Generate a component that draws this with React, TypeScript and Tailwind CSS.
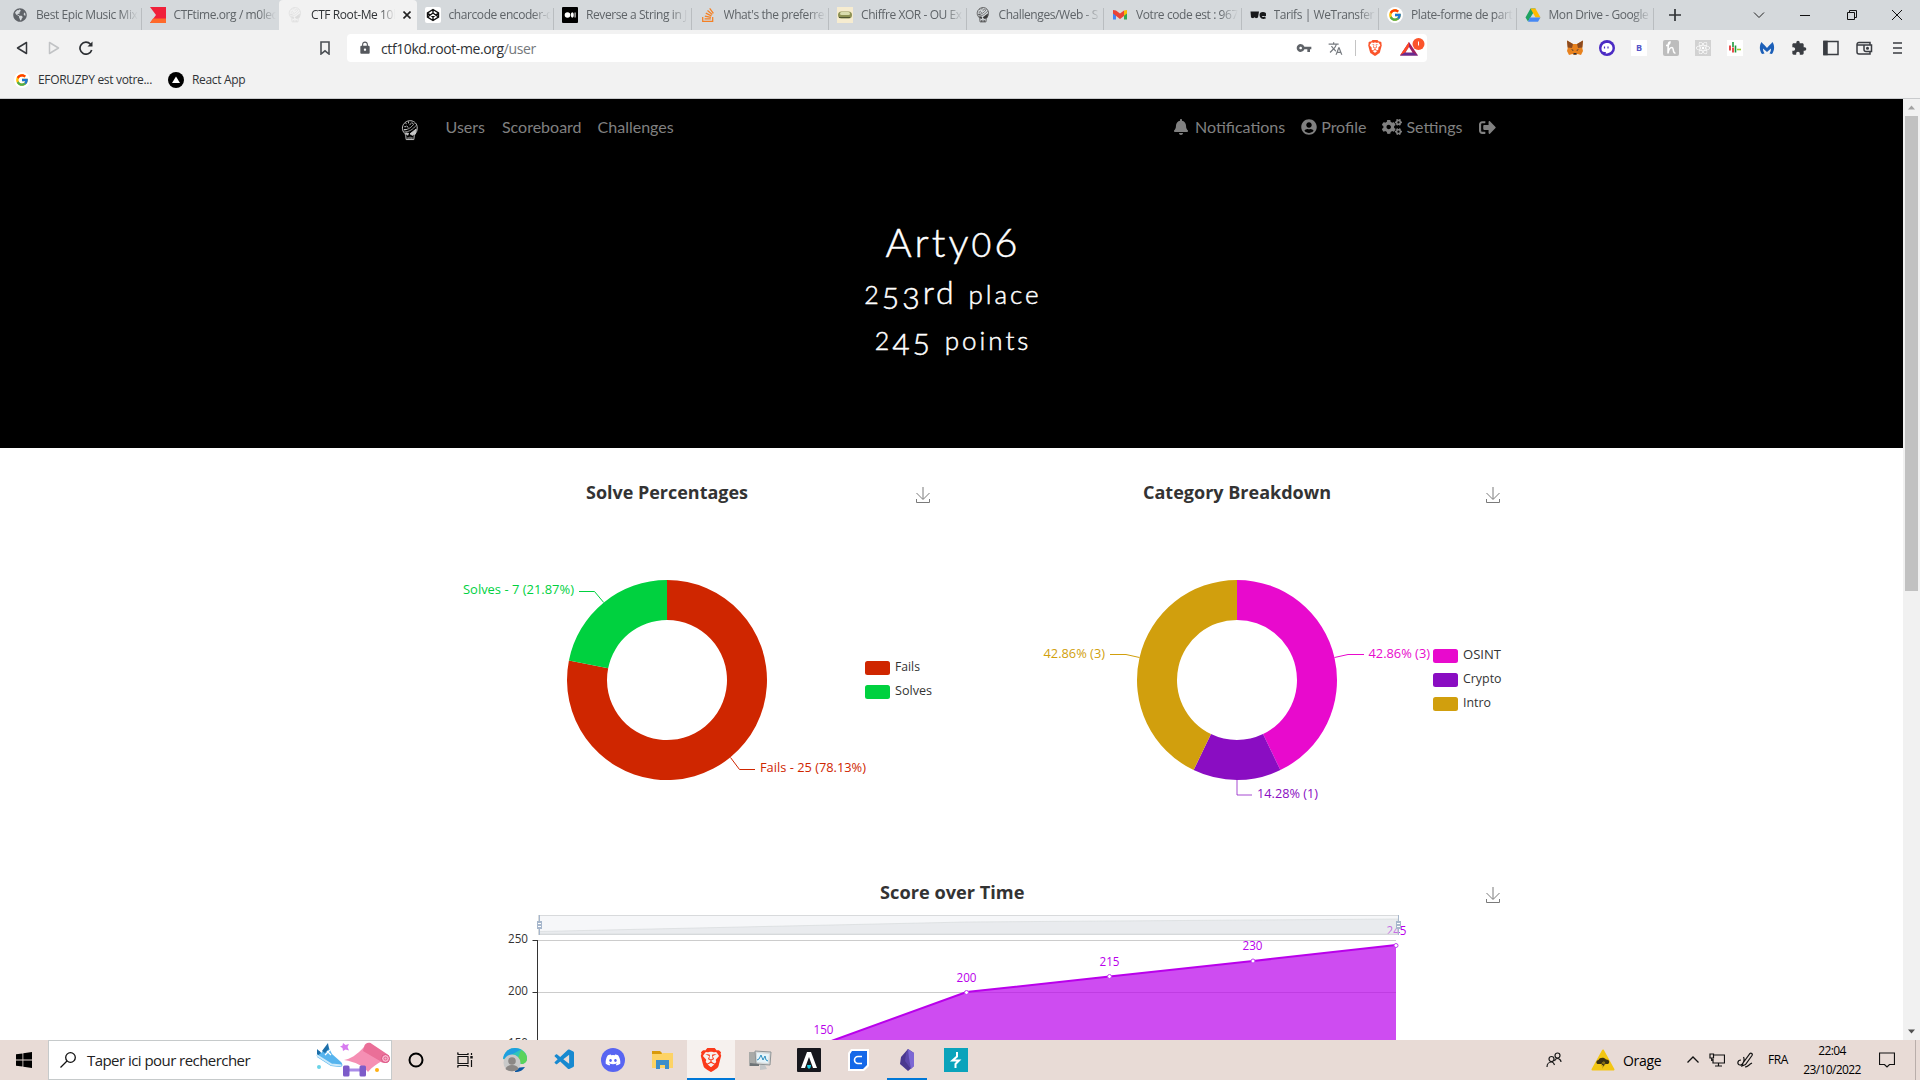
import React from "react";
import {
  FaBell,
  FaUserCircle,
  FaCogs,
  FaSignOutAlt,
  FaDiscord,
  FaStackOverflow,
  FaReact,
  FaGlobeAmericas,
} from "react-icons/fa";
import { MdLock, MdVpnKey, MdTranslate, MdExtension } from "react-icons/md";
import { SiBrave } from "react-icons/si";
import { VscVscode } from "react-icons/vsc";
import { FcGoogle } from "react-icons/fc";

/* ---------- small glyphs ---------- */

function Skull({ color, className }: { color: string; className: string }) {
  return (
    <svg viewBox="0 0 18 22" className={className} fill="none" stroke={color} strokeWidth="1">
      <path d="M3.500 14C0 11 .6 6 3 3.500S9-.2 12.500 1.500 17.500 7 16 12l-2.500 4-.5 4.500H5L4.500 16z" />
      <path d="M4 3l1.500 1M7.500 1.500v2M3 7h2M8.500 5l2-1.500M5.500 6l1.500 2M11 2.500l1 1.500M2.500 10h3" />
      <path d="M3 12.500c5 0 9-2.500 12.500-7M2.500 10.500C7 10 10.500 8 13.500 3.500" strokeWidth=".8" />
      <path d="M4 14l3 1.500M7 18v2.500M9 17.500v3M11 18v2.500" />
      <path d="M9 14.500l6.500-5-1 5-3 1.500z" fill={color} />
      <path d="M4.500 13.500l3 .5-1 2z" fill={color} />
    </svg>
  );
}

function Gmail() {
  return (
    <svg viewBox="0 0 16 16" className="size-4">
      <path d="M1 4v8.500h3V6z" fill="#4285f4" />
      <path d="M15 4v8.500h-3V6z" fill="#34a853" />
      <path d="M12 3.500 15 3v3.500l-3 2.300z" fill="#fbbc04" />
      <path d="M1 3l3 .5 4 3 4-3V9L8 12 1 6.500z" fill="#ea4335" />
    </svg>
  );
}

function Drive() {
  return (
    <svg viewBox="0 0 16 16" className="size-4">
      <path d="M5.500 1.500h5L8 6.300 3 14.500.5 10.500z" fill="#1ea362" />
      <path d="M5.500 1.500h5l5 9h-5z" fill="#ffba00" />
      <path d="M5 10.500h10.500L13 14.700H3z" fill="#4688f4" />
    </svg>
  );
}

function GoogleDot() {
  return (
    <span className="flex size-4 items-center justify-center rounded-full bg-white">
      <FcGoogle className="size-3.5" />
    </span>
  );
}

function TabIcon({ name }: { name: string }) {
  switch (name) {
    case "globe":
      return <FaGlobeAmericas className="size-3.5 text-[#5f6368]" />;
    case "ctftime":
      return (
        <svg viewBox="0 0 16 16" className="size-4">
          <path d="M0 0h16v16H0l6-8z" fill="#f0203a" />
          <path d="M3 11.500h13V16H0z" fill="#ff6a2b" />
        </svg>
      );
    case "rootme":
      return <Skull color="#dcdcdc" className="h-4 w-3.5" />;
    case "challenge":
      return <Skull color="#3a3a3a" className="h-4 w-3.5" />;
    case "codepen":
      return (
        <svg viewBox="0 0 16 16" className="size-4">
          <rect width="16" height="16" rx="2" fill="#fff" />
          <path d="M8 2.500 13.500 6v4L8 13.500 2.500 10V6zM2.500 6 8 10l5.500-4M2.500 10 8 6l5.500 4M8 2.500V6M8 10v3.500" fill="none" stroke="#111" strokeWidth="1.400" />
        </svg>
      );
    case "medium":
      return (
        <svg viewBox="0 0 16 16" className="size-4">
          <rect width="16" height="16" rx="1" fill="#000" />
          <circle cx="5.500" cy="8" r="2.800" fill="#fff" />
          <ellipse cx="10.300" cy="8" rx="1.500" ry="2.700" fill="#fff" />
          <rect x="12.600" y="5.500" width="1" height="5" fill="#fff" />
        </svg>
      );
    case "stack":
      return <FaStackOverflow className="size-4 text-[#f48024]" />;
    case "dcode":
      return (
        <svg viewBox="0 0 16 16" className="size-4">
          <rect width="16" height="16" fill="#f6ecd0" />
          <rect x="1" y="4.500" width="14" height="7" rx="3.500" fill="#8e9254" />
          <rect x="3" y="5" width="10" height="3" rx="1.500" fill="#d9dcae" />
          <path d="M2 10.500h11" stroke="#4f5530" />
        </svg>
      );
    case "gmail":
      return <Gmail />;
    case "we":
      return (
        <svg viewBox="0 0 16 16" className="size-4" fill="none" stroke="#17181a">
          <path d="M.5 4.500h8.500L8 10.500l-2 .8-1.500-1-1.500 1-2-.8z" fill="#17181a" stroke="none" />
          <path d="M15.500 10.500c-3 1-5 0-5-2.500s4.800-3 4.800 0h-4" strokeWidth="2" />
        </svg>
      );
    case "google":
      return <GoogleDot />;
    default:
      return <Drive />;
  }
}

const tabs = [
  { icon: "globe", label: "Best Epic Music Mix" },
  { icon: "ctftime", label: "CTFtime.org / m0leco" },
  { icon: "rootme", label: "CTF Root-Me 10k", active: true },
  { icon: "codepen", label: "charcode encoder-d" },
  { icon: "medium", label: "Reverse a String in J" },
  { icon: "stack", label: "What's the preferred" },
  { icon: "dcode", label: "Chiffre XOR - OU Ex" },
  { icon: "challenge", label: "Challenges/Web - S" },
  { icon: "gmail", label: "Votre code est : 967" },
  { icon: "we", label: "Tarifs | WeTransfer" },
  { icon: "google", label: "Plate-forme de part" },
  { icon: "drive", label: "Mon Drive - Google" },
];

function TabStrip() {
  return (
    <div className="flex h-[30px] shrink-0 bg-[#d5d9dc] pl-1 text-[12px] tracking-[-0.42px] text-[#5f6468]">
      {tabs.map((t) => (
        <div
          key={t.label}
          className={
            t.active
              ? "flex w-[137.5px] shrink-0 items-center rounded-t bg-[#f2f2f2] pl-2 text-[#303336]"
              : "flex w-[137.5px] shrink-0 items-center pl-2"
          }
        >
          <span className="flex size-4 shrink-0 items-center justify-center">
            <TabIcon name={t.icon} />
          </span>
          <span
            className={
              t.active
                ? "ml-2 w-[84px] overflow-hidden whitespace-nowrap [mask-image:linear-gradient(90deg,#000_68px,transparent)]"
                : "ml-2 w-[102px] overflow-hidden whitespace-nowrap [mask-image:linear-gradient(90deg,#000_84px,transparent)]"
            }
          >
            {t.label}
          </span>
          {t.active ? (
            <svg viewBox="0 0 8 8" className="ml-2 size-2" stroke="#222" strokeWidth="1.600">
              <path d="M.5.5l7 7M7.500.5l-7 7" />
            </svg>
          ) : (
            <span className={t.icon === "ctftime" ? "" : "ml-auto mt-2 h-[22px] w-px bg-[#b9bdc0]"} />
          )}
        </div>
      ))}
      <div className="flex flex-1 items-center pl-[15px] pr-[18px]">
        <svg viewBox="0 0 12 12" className="size-3" stroke="#303336" strokeWidth="1.700">
          <path d="M6 0v12M0 6h12" />
        </svg>
        <svg viewBox="0 0 12 12" className="ml-[72px] size-3" stroke="#222" fill="none">
          <path d="M1 3.500l5 5 5-5" />
        </svg>
        <svg viewBox="0 0 10 12" className="ml-[35px] h-3 w-2.5" stroke="#111">
          <path d="M0 6.500h10" />
        </svg>
        <svg viewBox="0 0 12 12" className="ml-9 size-3" stroke="#111" fill="none">
          <path d="M1.500 3.500h7v7h-7zM3.500 3.500v-2h7v7h-2" />
        </svg>
        <svg viewBox="0 0 10 10" className="ml-auto size-2.5" stroke="#111">
          <path d="M0 0l10 10M10 0L0 10" />
        </svg>
      </div>
    </div>
  );
}

function Extensions() {
  return (
    <div className="flex items-center gap-4">
      <svg viewBox="0 0 16 16" className="size-4">
        <path d="M0 .5 6 4h4L16 .5 15.300 8l.7 3-2 4-3.500-1-1.500 1H7l-1.500-1L2 15l-2-4 .7-3z" fill="#e8821e" />
        <path d="M0 .5 6 4 5 8 .7 7.500zM16 .5 10 4l1 4 4.300-.5z" fill="#8a4a20" />
        <path d="M4 9l2.500 1L6 11zM12 9l-2.500 1 .5 1zM6.500 13h3v1.500h-3z" fill="#2b2f3a" />
      </svg>
      <svg viewBox="0 0 16 16" className="size-4">
        <circle cx="8" cy="8" r="8" fill="#4b2bc4" />
        <path d="M2.500 9c0-4 2.500-6 5.500-6s5.500 2 5.500 5c0 4-4 5.500-7 5.500 1-1 .5-1.500-1-1.500-2 0-3-1-3-3z" fill="#fff" />
        <path d="M5.500 6.500v2M9 6.500v2" stroke="#4b2bc4" strokeWidth="1.200" />
      </svg>
      <span className="flex size-4 items-center justify-center bg-white text-[9px] font-bold text-[#5453c8]">B</span>
      <svg viewBox="0 0 16 16" className="size-4" fill="none" stroke="#fff" strokeWidth="1.500">
        <rect width="16" height="16" rx="2" fill="#bdbdbd" stroke="none" />
        <path d="M3 5.500c2 0 4-1.500 4-3.500-2 0-2 3-2 11.500C5.500 9.500 7 7.500 9 7.500s.5 6 3.500 5.500" />
      </svg>
      <span className="flex size-4 items-center justify-center bg-[#d2d2d2]">
        <FaReact className="size-3.5 text-white" />
      </span>
      <svg viewBox="0 0 16 16" className="size-4" fill="none" strokeWidth="1.600">
        <rect width="16" height="16" fill="#fff" />
        <path d="M3 5.500v5M6 7.500v5" stroke="#e02020" />
        <path d="M6 2v5M8.500 5.500v7" stroke="#1d9a3c" />
        <path d="M10 9.500h4" stroke="#9acd32" />
      </svg>
      <svg viewBox="0 0 16 16" className="size-4">
        <path d="M3 14C0 10 .5 5 2.500 2 4 4 6 5.500 8 8c2-2.500 4-4 5.500-6 2 3 2.500 8-.5 12l-2.500-.5c1-1.500 1.500-3 1.500-5L8 12 4 8.500c0 2 .5 3.500 1.500 5z" fill="#1c5fb8" />
      </svg>
      <MdExtension className="size-4 text-[#3a3d42]" />
      <svg viewBox="0 0 16 16" className="size-4" fill="none" stroke="#3a3d42" strokeWidth="1.500">
        <path d="M1 1.500h14v13H1z" />
        <path d="M1 1.500h3v13H1z" fill="#3a3d42" />
      </svg>
      <svg viewBox="0 0 17 16" className="ml-px h-4 w-[17px]" fill="none" stroke="#3a3d42" strokeWidth="1.500">
        <path d="M14 5V2.500H3A2 2 0 0 0 1 4.500V12a2 2 0 0 0 2 2h11v-2.500M1 5h14.500v6.500H10a2 2 0 0 1-2-2V5" />
        <circle cx="11.500" cy="8.300" r=".8" />
      </svg>
      <svg viewBox="0 0 16 16" className="ml-px size-4" stroke="#3a3d42" strokeWidth="1.500">
        <path d="M3 3h9M3 8h9M3 13h9" />
      </svg>
    </div>
  );
}

function Toolbar() {
  return (
    <div className="flex h-8 shrink-0 items-end bg-[#f2f2f2] pr-3.5">
      <div className="flex h-7 w-[347px] items-center pl-4">
        <svg viewBox="0 0 12 14" className="h-3.5 w-3" fill="none" stroke="#34373b" strokeWidth="1.500">
          <path d="M10.500 1.500v11L1.500 7z" strokeLinejoin="round" />
        </svg>
        <svg viewBox="0 0 12 14" className="ml-5 h-3.5 w-3" fill="none" stroke="#c1c3c5" strokeWidth="1.500">
          <path d="M1.500 1.500v11l9-5.500z" strokeLinejoin="round" />
        </svg>
        <svg viewBox="0 0 14 14" className="ml-[19px] size-3.5" fill="none" stroke="#2c2f33" strokeWidth="1.700">
          <path d="M12.700 9A6 6 0 1 1 11.500 3.200" />
          <path d="M13.500.5v5h-5z" fill="#2c2f33" stroke="none" />
        </svg>
        <svg viewBox="0 0 10 14" className="ml-[227px] h-3.5 w-2.5" fill="none" stroke="#4b4f54" strokeWidth="1.600">
          <path d="M1 1h8v12L5 9.800 1 13z" />
        </svg>
      </div>
      <div className="flex h-7 w-[1080px] items-center rounded bg-white pl-[11px] pr-0.5">
        <MdLock className="size-3.5 text-[#55585d]" />
        <span className="ml-[9px] text-[14px] tracking-[-0.4px] text-[#303336]">
          ctf10kd.root-me.org<span className="text-[#74787c]">/user</span>
        </span>
        <MdVpnKey className="ml-auto size-4 text-[#5f6368]" />
        <MdTranslate className="ml-4 size-[15px] text-[#777b80]" />
        <span className="ml-3 h-4 w-px bg-[#c4c4c4]" />
        <SiBrave className="ml-[11px] size-4 text-[#fb542b]" />
        <svg viewBox="0 0 26 20" className="ml-4 h-5 w-[26px]">
          <path d="M10 4 19 17.500H1z" fill="#9e1f63" />
          <path d="M10 4 1 17.500l5-3 4-5.500z" fill="#ff4724" />
          <path d="M1 17.500h18l-5-3H6z" fill="#662d91" />
          <path d="M10 9l3.500 5.500h-7z" fill="#fff" />
          <circle cx="19.500" cy="6" r="6" fill="#fb542b" />
          <path d="M19.500 3.500v4" stroke="#fff" />
        </svg>
      </div>
      <div className="ml-auto flex h-7 items-center">
        <Extensions />
      </div>
    </div>
  );
}

function Bookmarks() {
  return (
    <div className="flex h-[37px] shrink-0 items-center border-b border-[#c9cbcd] bg-[#f2f2f2] pl-3.5 text-[12px] tracking-[-0.32px] text-[#303336]">
      <GoogleDot />
      <span className="ml-2 w-[114px] whitespace-nowrap">EFORUZPY est votre...</span>
      <svg viewBox="0 0 16 16" className="ml-4 size-4">
        <circle cx="8" cy="8" r="8" fill="#000" />
        <path d="M8 4.500l4 6.500H4z" fill="#fff" />
      </svg>
      <span className="ml-2">React App</span>
    </div>
  );
}

/* ---------- site ---------- */

function Hero() {
  return (
    <div className="h-[349px] bg-black">
      <div className="mx-auto flex h-[56px] w-[1110px] items-center font-[Lato,sans-serif] text-[16px] leading-6 text-[#808080]">
        <Skull color="#c8c8c8" className="ml-1 mt-1.5 h-[21px] w-[18px]" />
        <div className="ml-[27px] flex gap-4">
          <span>Users</span>
          <span className="ml-px">Scoreboard</span>
          <span>Challenges</span>
        </div>
        <div className="ml-auto mr-[11px] flex gap-4">
          <span className="flex items-center gap-1.5">
            <FaBell className="size-4" />
            Notifications
          </span>
          <span className="flex items-center gap-1">
            <FaUserCircle className="size-4" />
            Profile
          </span>
          <span className="flex items-center gap-1">
            <FaCogs className="size-5" />
            Settings
          </span>
          <span className="flex items-center">
            <FaSignOutAlt className="size-[17px]" />
          </span>
        </div>
      </div>
      <div className="flex flex-col items-center pl-[3px] pt-[60px] font-[Lato,sans-serif] font-light tracking-[3px] text-white [-webkit-text-stroke:0.5px_#fff]">
        <h1 className="h-[54px] text-[40px] leading-[54px]">
          Arty<span className="text-[34px]">0</span>6
        </h1>
        <h2 className="h-[46px] whitespace-nowrap text-[32px] leading-[46px]">
          <span className="text-[25px]">2</span>
          <span className="align-[-5px] text-[30px] leading-none">53</span>rd{" "}
          <span className="text-[26px]">place</span>
        </h2>
        <h2 className="h-[46px] whitespace-nowrap text-[32px] leading-[46px]">
          <span className="text-[25px]">2</span>
          <span className="align-[-5px] text-[30px] leading-none">45</span> <span className="text-[26px]">points</span>
        </h2>
      </div>
    </div>
  );
}

type Slice = { name: string; share: number; color: string };

function arc(cx: number, cy: number, from: number, to: number) {
  const p = (t: number, r: number) =>
    `${cx + r * Math.sin(2 * Math.PI * t)} ${cy - r * Math.cos(2 * Math.PI * t)}`;
  const large = to - from > 0.5 ? 1 : 0;
  return `M${p(from, 100)}A100 100 0 ${large} 1 ${p(to, 100)}L${p(to, 60)}A60 60 0 ${large} 0 ${p(from, 60)}Z`;
}

function Label({
  x,
  y,
  w,
  fill = "#333",
  size = 12,
  bold = false,
  children,
}: {
  x: number;
  y: number;
  w: number;
  fill?: string;
  size?: number;
  bold?: boolean;
  children: React.ReactNode;
}) {
  return (
    <text x={x} y={y} textLength={w} fontSize={size} fontWeight={bold ? 700 : 400} fill={fill} lengthAdjust="spacingAndGlyphs">
      {children}
    </text>
  );
}

function Download({ x, y }: { x: number; y: number }) {
  return (
    <g transform={`translate(${x} ${y})`} fill="none" stroke="#7a7a7a">
      <path d="M7 0v12M.5 6 7 12.500 13.500 6M.5 12v3.500h13V12" />
    </g>
  );
}

function Donut({ slices, cx }: { slices: Slice[]; cx: number }) {
  let acc = 0;
  return (
    <>
      {slices.map((s) => {
        const from = acc;
        acc += s.share;
        return <path key={s.name} d={arc(cx, 200, from, acc)} fill={s.color} />;
      })}
    </>
  );
}

function SolveChart() {
  return (
    <svg viewBox="0 0 540 400" className="h-[400px] w-[540px]">
      <Label x={189} y={19} w={162} size={18} bold>
        Solve Percentages
      </Label>
      <Download x={519} y={7} />
      <Donut
        cx={270}
        slices={[
          { name: "Fails", share: 0.78125, color: "#cf2600" },
          { name: "Solves", share: 0.21875, color: "#00d13f" },
        ]}
      />
      <path d="M206.700 122.500 197.500 111.500H182" fill="none" stroke="#00d13f" />
      <Label x={66} y={114} w={111} fill="#00d13f">
        Solves - 7 (21.87%)
      </Label>
      <path d="M333.500 277.500 342.500 289.500H358" fill="none" stroke="#cf2600" />
      <Label x={363} y={292} w={106} fill="#cf2600">
        Fails - 25 (78.13%)
      </Label>
      <rect x="468" y="181" width="25" height="14" rx="2.500" fill="#cf2600" />
      <Label x={498} y={191} w={25}>
        Fails
      </Label>
      <rect x="468" y="205" width="25" height="14" rx="2.500" fill="#00d13f" />
      <Label x={498} y={215} w={37}>
        Solves
      </Label>
    </svg>
  );
}

function CategoryChart() {
  return (
    <svg viewBox="0 0 540 400" className="h-[400px] w-[540px]">
      <Label x={176} y={19} w={188} size={18} bold>
        Category Breakdown
      </Label>
      <Download x={519} y={7} />
      <Donut
        cx={270}
        slices={[
          { name: "OSINT", share: 3 / 7, color: "#e80acd" },
          { name: "Crypto", share: 1 / 7, color: "#8a0dc2" },
          { name: "Intro", share: 3 / 7, color: "#d19f0d" },
        ]}
      />
      <path d="M367.500 177.500 381 174.500H397" fill="none" stroke="#e80acd" />
      <Label x={401.500} y={178} w={61.500} fill="#e80acd">
        42.86% (3)
      </Label>
      <path d="M172.500 177.500 159 174.500H143" fill="none" stroke="#d19f0d" />
      <Label x={76.500} y={178} w={61.500} fill="#d19f0d">
        42.86% (3)
      </Label>
      <path d="M270 300V315H285" fill="none" stroke="#8a0dc2" strokeOpacity=".75" />
      <Label x={290} y={318} w={61} fill="#8a0dc2">
        14.28% (1)
      </Label>
      <rect x="466" y="169" width="25" height="14" rx="2.500" fill="#e80acd" />
      <Label x={496} y={179} w={38}>
        OSINT
      </Label>
      <rect x="466" y="193" width="25" height="14" rx="2.500" fill="#8a0dc2" />
      <Label x={496} y={203} w={38.500}>
        Crypto
      </Label>
      <rect x="466" y="217" width="25" height="14" rx="2.500" fill="#d19f0d" />
      <Label x={496} y={227} w={28}>
        Intro
      </Label>
    </svg>
  );
}

function ZoomHandle({ x }: { x: number }) {
  return (
    <g>
      <path d={`M${x} 35v20`} stroke="#a7b7cc" />
      <rect x={x - 2.5} y="41" width="5" height="8" fill="#a7b7cc" />
      <path d={`M${x - 1.5} 43.500h3M${x - 1.5} 46.500h3`} stroke="#fff" />
    </g>
  );
}

function ScoreChart() {
  const points = [
    [426, 164],
    [569.5, 112.5],
    [712.5, 96.5],
    [856, 81],
    [999, 65.5],
  ];
  return (
    <svg viewBox="0 0 1110 160" className="h-[160px] w-[1110px]">
      <Label x={483} y={19} w={144.500} size={18} bold>
        Score over Time
      </Label>
      <Download x={1089} y={7} />
      <path d="M140 60.500H999M140 112.500H999" stroke="#ccc" />
      <path d="M140.500 60V160M135.500 60.500h5M135.500 112.500h5" stroke="#333" />
      <Label x={111} y={63} w={20}>
        250
      </Label>
      <Label x={111} y={115} w={20}>
        200
      </Label>
      <Label x={111} y={167} w={20}>
        150
      </Label>
      <path d="M426 164 569.500 112 712.500 96.500 856 81 999 65V160H426z" fill="#b900eb" fillOpacity=".7" />
      <path d="M426 164 569.500 112 712.500 96.500 856 81 999 65" fill="none" stroke="#b900eb" strokeWidth="2" />
      {points.slice(1).map(([x, y]) => (
        <circle key={x} cx={x} cy={y} r="2" fill="#fff" stroke="#c23df0" />
      ))}
      <Label x={416.500} y={154} w={20} fill="#b900eb">
        150
      </Label>
      <Label x={559.500} y={102} w={20} fill="#b900eb">
        200
      </Label>
      <Label x={702.500} y={86} w={20} fill="#b900eb">
        215
      </Label>
      <Label x={845.500} y={70} w={20} fill="#b900eb">
        230
      </Label>
      <Label x={989.500} y={54.500} w={20} fill="#b900eb">
        245
      </Label>
      <rect x="141.500" y="35.500" width="860" height="19" fill="#e4e9ee" fillOpacity=".35" stroke="#d8dadc" />
      <path d="M142 51.500 570 42 1001 39V54H142z" fill="#b9c4ca" fillOpacity=".22" stroke="#d4d6d8" strokeWidth=".6" />
      <ZoomHandle x={142.500} />
      <ZoomHandle x={1001.500} />
    </svg>
  );
}

function ScrollBar() {
  return (
    <div className="flex w-[17px] shrink-0 flex-col items-center bg-[#f1f1f1]">
      <svg viewBox="0 0 17 17" className="size-[17px] shrink-0">
        <path d="M8.500 6.500l3.500 4H5z" fill="#a3a3a3" />
      </svg>
      <div className="h-[475px] w-[13px] bg-[#c1c1c1]" />
      <svg viewBox="0 0 17 17" className="mt-auto size-[17px] shrink-0">
        <path d="M8.500 10.500l3.500-4H5z" fill="#505050" />
      </svg>
    </div>
  );
}

/* ---------- taskbar ---------- */

function SearchArt() {
  return (
    <svg viewBox="0 0 76 36" className="h-9 w-[76px]">
      <path d="M2 8l4 3 7-7 4 8 9 8c2 2 2 5-1 5l-9-1L2 15z" fill="#56b4ee" />
      <path d="M2 7c2 2 3 2 4 4l-4 3zM7 9l6-8 1 6-4 4z" fill="#1c6ea8" />
      <path d="M1.500 13l15 9.500 10 1" fill="none" stroke="#cdeafa" strokeWidth="2" />
      <path d="M12 9l4 4M15 8l-5 5" stroke="#fff" strokeWidth="1.200" />
      <path d="M28 1l2.500 2L34 2l-1.500 3L34 8.500 30.500 7.500 28 9l-.5-3L25 4.500l2.500-1z" fill="#d77bf0" />
      <path d="M29 18c6-1 13-5 20-13l18 14c-5 3-10 6-14 11-5-6-12-10-24-12z" fill="#f58fb4" />
      <path d="M49 5c1-5 6-5 8-3l15 10c4 3 3 9-1 9-2 0-4 0-6-2L48 9z" fill="#ea6f98" />
      <circle cx="70.500" cy="16.500" r="4" fill="#f9b2ca" stroke="#d94f80" />
      <circle cx="70.500" cy="16.500" r="1.500" fill="none" stroke="#d94f80" strokeWidth=".8" />
      <path d="M34 28h12" stroke="#a98be8" strokeWidth="3" />
      <rect x="28" y="23.500" width="6.500" height="11" rx="1.500" fill="#7d5cc9" />
      <rect x="44.500" y="23.500" width="6.500" height="11" rx="1.500" fill="#7d5cc9" />
      <circle cx="4" cy="25" r="2" fill="#6ad4e8" />
      <circle cx="62" cy="28" r="2" fill="#ffb013" />
    </svg>
  );
}

function TaskIcons() {
  const cell = "flex h-10 w-[48px] shrink-0 items-center justify-center";
  return (
    <div className="flex gap-[1px]">
      <div className={cell}>
        <svg viewBox="0 0 16 16" className="size-4">
          <circle cx="8" cy="8" r="6.500" fill="none" stroke="#000" strokeWidth="2" />
        </svg>
      </div>
      <div className={cell}>
        <svg viewBox="0 0 16 16" className="size-4" fill="none" stroke="#111" strokeWidth="1.200">
          <path d="M1 4.500h10v7H1zM0 1h1v1.500h10V1M0 15h1v-1.500h10V15M14.500 1v2M14.500 8v7" />
          <path d="M13.300 4h2.400v2.500h-2.400z" fill="#111" stroke="none" />
        </svg>
      </div>
      <div className="flex h-10 w-[50px] items-center justify-center">
        <svg viewBox="0 0 24 24" className="size-6">
          <path d="M0 11C1 4 6 0 12 0c7 0 12 5 12 10 0 4-3 6-6 6z" fill="#2fc4b8" />
          <path d="M0 11C1 4 6 0 12 0c2 0 4 .5 6 1.500L8 7z" fill="#1e9fe0" />
          <path d="M18 2c4 2 6 5 6 9 0 3-3 5-6 5l-3-6z" fill="#5bd35a" />
          <path d="M12 24c5 0 8-2 10-5l-10 1z" fill="#0c59a4" />
          <circle cx="9" cy="15" r="8.500" fill="#c9c9c9" />
          <circle cx="9" cy="13" r="3.800" fill="#8b8785" />
          <path d="M2.500 21c1-3 3-4 6.500-4s5.500 1 6.500 4c-3 3-10 3-13 0z" fill="#8b8785" />
        </svg>
      </div>
      <div className="flex h-10 w-[47px] shrink-0 items-center justify-center">
        <VscVscode className="size-6 text-[#1789d0]" />
      </div>
      <div className={cell}>
        <span className="flex size-6 items-center justify-center rounded-full bg-[#5865f2]">
          <FaDiscord className="size-4 text-white" />
        </span>
      </div>
      <div className={cell}>
        <svg viewBox="0 0 24 24" className="size-6">
          <path d="M2 3h8l2 2v4H2z" fill="#d99a0b" />
          <path d="M2 6h9l2-1h10v15H2z" fill="#fdd365" />
          <path d="M6 21v-9h13v9h-4v-4h-5v4z" fill="#3d8ecb" />
        </svg>
      </div>
      <div className="flex h-10 w-[48px] items-center justify-center border-b-2 border-[#0078d7] bg-[#f6f1ee] pt-0.5">
        <SiBrave className="size-6 text-[#fb3a1b]" />
      </div>
      <div className={cell}>
        <svg viewBox="0 0 24 24" className="size-6">
          <path d="M1 4h10v14H1z" fill="#a9aaa8" />
          <path d="M7 3l16 1-1 13-14-1z" fill="#d7dadb" stroke="#8f9496" />
          <path d="M9 5l12 1-1 9-11-1z" fill="#e6f4fa" />
          <path d="M9 12l2-1 2-4 2 5 2-4 1 4 2 1" fill="none" stroke="#2d8fc0" />
          <path d="M12 17h5l2 4-7 1z" fill="#c3c6c8" />
          <path d="M2 15l9 1v2H2z" fill="#6e7477" />
        </svg>
      </div>
      <div className={cell}>
        <svg viewBox="0 0 24 24" className="size-6">
          <rect width="24" height="24" rx="1" fill="#16171d" />
          <path d="M10 4h4l6 16h-4l-4-11-4 11H4z" fill="#fff" />
          <path d="M10 17h4l-.5 2.500L12 21l-1.500-1.500z" fill="#18d0e8" />
        </svg>
      </div>
      <div className={cell}>
        <svg viewBox="0 0 24 24" className="size-6">
          <path d="M5 1h18v17l-5 5H2V5z" fill="#fff" />
          <path d="M6 3h15v14l-4 4H4V6z" fill="#1568e8" />
          <path d="M16 8.500h-4a3.500 3.500 0 0 0 0 7h4" fill="none" stroke="#fff" strokeWidth="1.600" />
        </svg>
      </div>
      <div className="flex h-10 w-[48px] items-center justify-center">
        <div className="flex h-10 w-10 items-center justify-center border-b-2 border-[#0078d7] pt-0.5">
          <svg viewBox="0 0 24 24" className="size-6">
            <path d="M13 1l6 4v13l-6 5-8-7 1-7z" fill="#4a388f" />
            <path d="M13 1l6 4v13l-3 3-5-9z" fill="#7c68d4" />
            <path d="M13 1l1 9 2 11-6-8 1-8z" fill="#5b47ab" />
          </svg>
        </div>
      </div>
      <div className={cell}>
        <svg viewBox="0 0 24 24" className="size-6">
          <rect width="24" height="24" fill="#0aa3bb" />
          <path d="M13 4v4.500L8.500 12.500 15 12.500 11.500 16v4" fill="none" stroke="#fff" strokeWidth="2" />
        </svg>
      </div>
    </div>
  );
}

function Tray() {
  return (
    <div className="ml-auto flex h-10 items-center text-black">
      <svg viewBox="0 0 16 16" className="size-4" fill="none" stroke="#1a1a1a" strokeWidth="1.200">
        <circle cx="5.500" cy="7" r="2.500" />
        <path d="M1 15c0-3 2-5 4.500-5S8 12 8.500 13" />
        <circle cx="11.500" cy="3.500" r="2.500" />
        <path d="M8.500 9c.5-2 1.500-2.500 3-2.500S15 8 15 10" />
      </svg>
      <svg viewBox="0 0 24 22" className="ml-[29px] h-[22px] w-6">
        <path d="M12 1.500 22.500 20.500h-21z" fill="#f3c614" stroke="#f3c614" strokeWidth="2" strokeLinejoin="round" />
        <path d="M6.500 15c-2-1-1-4 1-4 1-3 6-3 7.500-.5 3-.5 4.500 3 2 4.500z" fill="#3a3012" />
        <path d="M12 13l-2 3.500h2L11 19.500l3.500-4.500h-2l1-2z" fill="#3a3012" stroke="#f3c614" strokeWidth=".5" />
      </svg>
      <span className="ml-2 w-[64px] text-[14px] tracking-[-0.3px]">Orage</span>
      <svg viewBox="0 0 12 8" className="h-2 w-3" fill="none" stroke="#111" strokeWidth="1.300">
        <path d="M.5 6.500 6 1l5.500 5.500" />
      </svg>
      <svg viewBox="0 0 16 14" className="ml-2.5 h-3.5 w-4" fill="none" stroke="#111" strokeWidth="1.200">
        <path d="M5 2h10.500v8H4V6M9.500 10v3M6 13h7M1 1h3.500v4H1zM2.700 5v3" />
      </svg>
      <svg viewBox="0 0 16 16" className="ml-3 size-4" fill="none" stroke="#111" strokeWidth="1.200">
        <path d="M6 11 13 1.500c1-1 3 .5 2 2L8.500 12.500 5 14zM4 8c-4 0-4 5-1 5 3 .5 5-5 3.500-8M8 15c3 0 3-2 7-4" />
      </svg>
      <span className="ml-[15px] w-[22px] text-[12px] tracking-[-0.4px]">FRA</span>
      <div className="ml-3 w-[60px] text-center text-[12px] leading-[19px] tracking-[-0.6px]">
        <div>22:04</div>
        <div>23/10/2022</div>
      </div>
      <svg viewBox="0 0 16 16" className="ml-[17px] size-4" fill="none" stroke="#111" strokeWidth="1.200">
        <path d="M.5 1h15v11.500h-5L8 15l-2.500-2.500h-5z" />
      </svg>
      <span className="ml-5 mr-1 h-10 w-px bg-[#b9aeaa]" />
    </div>
  );
}

function Taskbar() {
  return (
    <div className="flex h-10 shrink-0 items-center bg-[#e8dbd6]">
      <div className="flex w-12 items-center justify-center">
        <svg viewBox="0 0 16 16" className="size-4">
          <path d="M0 2.300 6.500 1.400v6.200H0zM7.300 1.300 16 0v7.600H7.300zM0 8.400h6.500v6.200L0 13.700zM7.300 8.400H16V16l-8.700-1.300z" />
        </svg>
      </div>
      <div className="flex h-10 w-[344px] items-center border border-[#c6cacb] bg-white pl-[11px]">
        <svg viewBox="0 0 16 16" className="size-4" fill="none" stroke="#111" strokeWidth="1.300">
          <circle cx="10.500" cy="5.500" r="4.800" />
          <path d="M7 9 .5 15.500" />
        </svg>
        <span className="ml-[11px] text-[15px] tracking-[-0.55px] text-[#222]">Taper ici pour rechercher</span>
        <div className="ml-auto">
          <SearchArt />
        </div>
      </div>
      <TaskIcons />
      <Tray />
    </div>
  );
}

export default function App() {
  return (
    <div className="flex h-[1080px] w-[1920px] flex-col overflow-hidden bg-white font-['Open_Sans',sans-serif]">
      <TabStrip />
      <Toolbar />
      <Bookmarks />
      <div className="flex min-h-0 flex-1">
        <main className="flex-1 overflow-hidden">
          <Hero />
          <div className="mx-auto w-[1110px] pt-8">
            <div className="flex h-[400px] gap-[30px]">
              <SolveChart />
              <CategoryChart />
            </div>
            <ScoreChart />
          </div>
        </main>
        <ScrollBar />
      </div>
      <Taskbar />
    </div>
  );
}
